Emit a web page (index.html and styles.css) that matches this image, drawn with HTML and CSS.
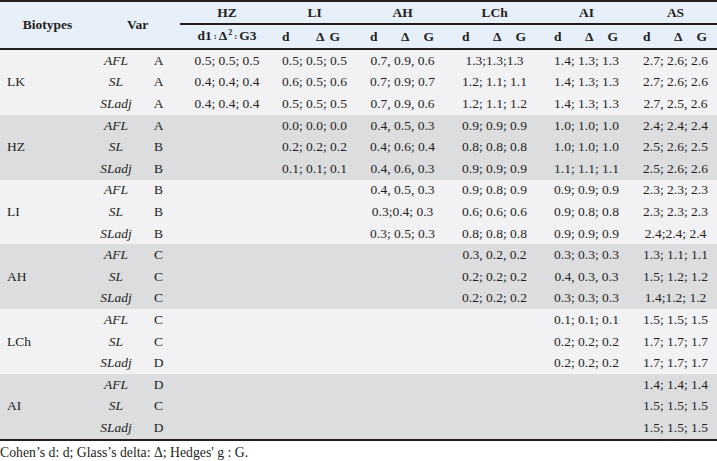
FILE: index.html
```html
<!DOCTYPE html>
<html lang="en">
<head>
<meta charset="utf-8">
<title>Effect sizes by biotype</title>
<link rel="stylesheet" href="styles.css">
</head>
<body>
<table class="grid">
  <colgroup>
    <col class="c-bio"><col class="c-name"><col class="c-let">
    <col class="c-hz"><col class="c-li"><col class="c-ah"><col class="c-lch"><col class="c-ai"><col class="c-as">
  </colgroup>
  <thead>
    <tr class="h1">
      <th rowspan="2">Biotypes</th>
      <th rowspan="2" colspan="2">Var</th>
      <th class="grp">HZ</th>
      <th class="grp">LI</th>
      <th class="grp">AH</th>
      <th class="grp">LCh</th>
      <th class="grp">AI</th>
      <th class="grp">AS</th>
    </tr>
    <tr class="h2">
      <th><span class="hz-sub">d1<span class="col">:</span>Δ<sup>2</sup><span class="col">:</span>G3</span></th>
      <th><span class="dg dg-li"><span>d</span><span class="dl">Δ</span><span class="gg">G</span></span></th>
      <th><span class="dg"><span>d</span><span class="dl">Δ</span><span class="gg">G</span></span></th>
      <th><span class="dg"><span>d</span><span class="dl">Δ</span><span class="gg">G</span></span></th>
      <th><span class="dg"><span>d</span><span class="dl">Δ</span><span class="gg">G</span></span></th>
      <th><span class="dg"><span>d</span><span class="dl">Δ</span><span class="gg">G</span></span></th>
    </tr>
  </thead>
  <tbody class="light">
    <tr><td rowspan="3" class="bio">LK</td><td class="nm">AFL</td><td>A</td><td>0.5; 0.5; 0.5</td><td>0.5; 0.5; 0.5</td><td>0.7, 0.9, 0.6</td><td>1.3;1.3;1.3</td><td>1.4; 1.3; 1.3</td><td>2.7; 2.6; 2.6</td></tr>
    <tr><td class="nm">SL</td><td>A</td><td>0.4; 0.4; 0.4</td><td>0.6; 0.5; 0.6</td><td>0.7; 0.9; 0.7</td><td>1.2; 1.1; 1.1</td><td>1.4; 1.3; 1.3</td><td>2.7; 2.6; 2.6</td></tr>
    <tr><td class="nm">SLadj</td><td>A</td><td>0.4; 0.4; 0.4</td><td>0.5; 0.5; 0.5</td><td>0.7, 0.9, 0.6</td><td>1.2; 1.1; 1.2</td><td>1.4; 1.3; 1.3</td><td>2.7, 2.5, 2.6</td></tr>
  </tbody>
  <tbody class="dark">
    <tr><td rowspan="3" class="bio">HZ</td><td class="nm">AFL</td><td>A</td><td></td><td>0.0; 0.0; 0.0</td><td>0.4, 0.5, 0.3</td><td>0.9; 0.9; 0.9</td><td>1.0; 1.0; 1.0</td><td>2.4; 2.4; 2.4</td></tr>
    <tr><td class="nm">SL</td><td>B</td><td></td><td>0.2; 0.2; 0.2</td><td>0.4; 0.6; 0.4</td><td>0.8; 0.8; 0.8</td><td>1.0; 1.0; 1.0</td><td>2.5; 2.6; 2.5</td></tr>
    <tr><td class="nm">SLadj</td><td>B</td><td></td><td>0.1; 0.1; 0.1</td><td>0.4, 0.6, 0.3</td><td>0.9; 0.9; 0.9</td><td>1.1; 1.1; 1.1</td><td>2.5; 2.6; 2.6</td></tr>
  </tbody>
  <tbody class="light">
    <tr><td rowspan="3" class="bio">LI</td><td class="nm">AFL</td><td>B</td><td></td><td></td><td>0.4, 0.5, 0.3</td><td>0.9; 0.8; 0.9</td><td>0.9; 0.9; 0.9</td><td>2.3; 2.3; 2.3</td></tr>
    <tr><td class="nm">SL</td><td>B</td><td></td><td></td><td>0.3;0.4; 0.3</td><td>0.6; 0.6; 0.6</td><td>0.9; 0.8; 0.8</td><td>2.3; 2.3; 2.3</td></tr>
    <tr><td class="nm">SLadj</td><td>B</td><td></td><td></td><td>0.3; 0.5; 0.3</td><td>0.8; 0.8; 0.8</td><td>0.9; 0.9; 0.9</td><td>2.4;2.4; 2.4</td></tr>
  </tbody>
  <tbody class="dark">
    <tr><td rowspan="3" class="bio">AH</td><td class="nm">AFL</td><td>C</td><td></td><td></td><td></td><td>0.3, 0.2, 0.2</td><td>0.3; 0.3; 0.3</td><td>1.3; 1.1; 1.1</td></tr>
    <tr><td class="nm">SL</td><td>C</td><td></td><td></td><td></td><td>0.2; 0.2; 0.2</td><td>0.4, 0.3, 0.3</td><td>1.5; 1.2; 1.2</td></tr>
    <tr><td class="nm">SLadj</td><td>C</td><td></td><td></td><td></td><td>0.2; 0.2; 0.2</td><td>0.3; 0.3; 0.3</td><td>1.4;1.2; 1.2</td></tr>
  </tbody>
  <tbody class="light">
    <tr><td rowspan="3" class="bio">LCh</td><td class="nm">AFL</td><td>C</td><td></td><td></td><td></td><td></td><td>0.1; 0.1; 0.1</td><td>1.5; 1.5; 1.5</td></tr>
    <tr><td class="nm">SL</td><td>C</td><td></td><td></td><td></td><td></td><td>0.2; 0.2; 0.2</td><td>1.7; 1.7; 1.7</td></tr>
    <tr><td class="nm">SLadj</td><td>D</td><td></td><td></td><td></td><td></td><td>0.2; 0.2; 0.2</td><td>1.7; 1.7; 1.7</td></tr>
  </tbody>
  <tbody class="dark last">
    <tr><td rowspan="3" class="bio">AI</td><td class="nm">AFL</td><td>D</td><td></td><td></td><td></td><td></td><td></td><td>1.4; 1.4; 1.4</td></tr>
    <tr><td class="nm">SL</td><td>C</td><td></td><td></td><td></td><td></td><td></td><td>1.5; 1.5; 1.5</td></tr>
    <tr><td class="nm">SLadj</td><td>D</td><td></td><td></td><td></td><td></td><td></td><td>1.5; 1.5; 1.5</td></tr>
  </tbody>
</table>
<p class="note">Cohen’s d: d; Glass’s delta: Δ; Hedges' g : G.</p>
</body>
</html>
```

FILE: styles.css
```css
html, body {
  margin: 0;
  padding: 0;
  background: #ffffff;
}
body {
  font-family: "Liberation Serif", "Times New Roman", serif;
  font-size: 13.5px;
  color: #231f20;
  width: 717px;
}
.grid {
  width: 717px;
  border-collapse: collapse;
  table-layout: fixed;
  border-top: 2px solid #231f20;
}
.c-bio { width: 95px; }
.c-name { width: 42px; }
.c-let { width: 43px; }
.c-hz { width: 94px; }
.c-li { width: 81px; }
.c-ah { width: 95px; }
.c-lch { width: 89px; }
.c-ai { width: 95px; }
.c-as { width: 83px; }

thead {
  background: #e7f0f9;
}
th {
  font-weight: bold;
  padding: 0;
  text-align: center;
  vertical-align: middle;
  line-height: 16px;
}
.h1 th { height: 21px; }
.h2 th { height: 23px; border-bottom: 2px solid #231f20; }
.h1 th[rowspan] { border-bottom: 2px solid #231f20; }
.h1 .grp { border-bottom: 2px solid #231f20; }

.hz-sub {
  display: inline-flex;
  align-items: baseline;
}
.hz-sub .col {
  font-size: 9px;
  margin: 0 2px;
  position: relative;
  top: -1px;
}
.hz-sub sup {
  font-size: 8px;
  vertical-align: 0;
  position: relative;
  top: -5px;
  margin-left: 1px;
}

.dg {
  display: inline-flex;
  width: 65px;
  text-align: left;
}
.dg .dl { margin-left: auto; }
.dg .gg { margin-left: 14px; margin-right: 1px; }
.dg-li .gg { margin-left: 5px; margin-right: 7px; }

td {
  padding: 0;
  height: 21.6px;
  line-height: 16px;
  text-align: center;
  vertical-align: middle;
  white-space: nowrap;
}
td.bio {
  text-align: left;
  padding-left: 7px;
}
td.nm {
  font-style: italic;
}
.light { background: #f2f2f4; }
.dark { background: #dcdddf; }
.last tr:last-child td,
.last td.bio {
  border-bottom: 2px solid #231f20;
}

.note {
  margin: 4px 0 0 0;
  font-size: 13.75px;
  line-height: 16px;
}
```
